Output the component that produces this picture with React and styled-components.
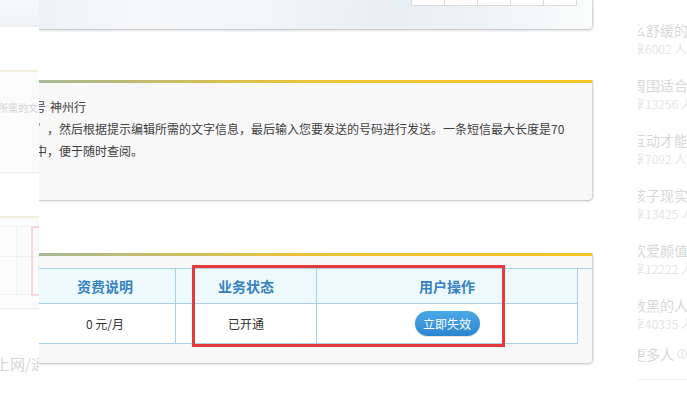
import React from "react";
import styled, { createGlobalStyle } from "styled-components";

const GlobalStyle = createGlobalStyle`
  html, body {
    margin: 0;
    padding: 0;
    background: #ffffff;
  }
  body {
    font-family: "Noto Sans CJK SC", "Noto Sans", sans-serif;
  }
`;

const Page = styled.div`
  display: flex;
  width: 687px;
  height: 403px;
  overflow: hidden;
  background: #ffffff;
`;

/* faded page behind, left side */
const LeftStrip = styled.div`
  flex: none;
  width: 39px;
  overflow: hidden;
  display: flex;
  flex-direction: column;
`;

const FadeBand = styled.div`
  flex: none;
  height: 26px;
  background: linear-gradient(180deg, #f7f9fa, #f0f3f6);
  border-bottom: 1px solid #ebebeb;
`;

const FadeLine = styled.div`
  flex: none;
  height: 2px;
  margin-top: ${(p) => p.$gap}px;
  background: #f1efdb;
`;

const FadeBox = styled.div`
  position: relative;
  flex: none;
  box-sizing: border-box;
  height: ${(p) => p.$h}px;
  padding-top: ${(p) => p.$pad || 0}px;
  background: #fbfbfb;
  border-bottom: 1px solid #efefef;
`;

const FadeText = styled.div`
  font-size: 10px;
  line-height: 12px;
  color: #d2d2d2;
  white-space: nowrap;
  text-indent: -2px;
`;

const FadeGrid = styled.div`
  display: grid;
  grid-template-columns: 17px 1fr;
  grid-template-rows: 30px 38px;
  margin-top: 8px;
  border-top: 1px solid #eef3f6;
  span {
    border-right: 1px solid #eef3f6;
    border-bottom: 1px solid #eef3f6;
  }
`;

const FadeMark = styled.div`
  position: absolute;
  left: 31px;
  top: 8px;
  width: 14px;
  height: 70px;
  box-sizing: border-box;
  border: 2px solid #f6d6d6;
`;

const FadeWord = styled.div`
  margin-top: 46px;
  font-size: 15px;
  line-height: 18px;
  color: #d6d6d6;
  white-space: nowrap;
  text-indent: -5px;
`;

/* main panel */
const Main = styled.div`
  flex: none;
  width: 555px;
  overflow: hidden;
  display: flex;
  flex-direction: column;
`;

const TopCard = styled.div`
  flex: none;
  box-sizing: border-box;
  width: 554px;
  height: 30px;
  display: flex;
  justify-content: flex-end;
  padding-right: 15px;
  background: linear-gradient(
    100deg,
    #eef2f6 0%,
    #f6f8fa 18%,
    #f3f6f8 40%,
    #e7eef4 62%,
    #eef3f6 80%,
    #fbfcfc 100%
  );
  border-right: 1px solid #d6d6d6;
  border-bottom: 1px solid #cdcdcd;
  border-bottom-right-radius: 5px;
  box-shadow: 1px 1px 2px rgba(0, 0, 0, 0.12);
`;

const MiniCells = styled.div`
  display: flex;
  height: 5px;
  border-bottom: 1px solid #dcdcdc;
  border-right: 1px solid #dcdcdc;
  span {
    width: 32px;
    border-left: 1px solid #dcdcdc;
    background: #ffffff;
  }
`;

const Card = styled.div`
  position: relative;
  flex: none;
  box-sizing: border-box;
  width: 554px;
  margin-top: ${(p) => p.$gap}px;
  padding-bottom: ${(p) => p.$bottom}px;
  background: #f8f8f8;
  border-right: 1px solid #d4d4d4;
  border-bottom: 1px solid #d0d0d0;
  border-bottom-right-radius: 5px;
  box-shadow: 1px 1px 2px rgba(0, 0, 0, 0.1);
`;

const Stripe = styled.div`
  height: 3px;
  background: linear-gradient(
    90deg,
    #a7b897 0%,
    #c7bd68 22%,
    #ecc236 48%,
    #f6c324 100%
  );
`;

const Desc = styled.div`
  padding-top: 13px;
  font-size: 12px;
  line-height: 22px;
  color: #3f3f3f;
`;

const Line = styled.div`
  display: flex;
  white-space: nowrap;
`;

const Lead = styled.span`
  flex: none;
  width: ${(p) => p.$w}px;
  margin-right: ${(p) => p.$space || 0}px;
  overflow: hidden;
  direction: rtl;
`;

const TableWrap = styled.div`
  padding-top: 12px;
`;

const Table = styled.div`
  display: grid;
  grid-template-columns: 141px 141px 261px;
  margin-left: -4px;
  border-top: 1px solid #a8d1e8;
`;

const Cell = styled.div`
  display: flex;
  align-items: center;
  justify-content: center;
  box-sizing: border-box;
  height: ${(p) => (p.$head ? 35 : 40)}px;
  border-right: 1px solid #a8d1e8;
  border-bottom: 1px solid #a8d1e8;
  background: ${(p) => (p.$head ? "#eef9fe" : "#ffffff")};
  color: ${(p) => (p.$head ? "#3582c3" : "#333333")};
  font-size: ${(p) => (p.$head ? 14 : 12)}px;
  font-weight: ${(p) => (p.$head ? 700 : 400)};
`;

const ActionButton = styled.button`
  width: 65px;
  height: 25px;
  padding: 0;
  border: none;
  border-radius: 13px;
  background: linear-gradient(180deg, #4ba8e7, #2c86d0);
  box-shadow: 0 1px 1px rgba(0, 0, 0, 0.12);
  color: #ffffff;
  font-family: inherit;
  font-size: 12px;
  cursor: pointer;
`;

const Highlight = styled.div`
  position: absolute;
  left: 153px;
  top: 12px;
  width: 313px;
  height: 82px;
  box-sizing: border-box;
  border: 3px solid #e6393c;
  pointer-events: none;
`;

/* faded page behind, right side */
const RightStrip = styled.div`
  flex: 1;
  overflow: hidden;
  padding-left: 16px;
  display: flex;
  flex-direction: column;
`;

const SideHeading = styled.div`
  margin-top: -15px;
  font-size: 14px;
  line-height: 14px;
  color: #cccccc;
  white-space: nowrap;
`;

const SideList = styled.div`
  margin-left: 28px;
  padding-top: 21px;
  overflow: hidden;
  display: flex;
  flex-direction: column;
  gap: 17px;
`;

const SideItem = styled.div`
  display: flex;
  flex-direction: column;
  white-space: nowrap;
`;

const SideTitle = styled.div`
  font-size: 14px;
  line-height: 20px;
  color: #d8d8d8;
  text-indent: -6px;
`;

const SideSub = styled.div`
  font-size: 12px;
  line-height: 18px;
  color: #e6e6e6;
  text-indent: -5px;
`;

const SideMore = styled.div`
  display: flex;
  align-items: center;
  gap: 3px;
  margin-top: -6px;
  font-size: 14px;
  line-height: 20px;
  color: #d8d8d8;
  white-space: nowrap;
  text-indent: -6px;
`;

const SideRule = styled.div`
  margin-top: -2px;
  height: 1px;
  background: #efefef;
`;

const topics = [
  { title: "么舒缓的压力", sub: "享6002 人参与" },
  { title: "周围适合的人", sub: "享13256 人参与" },
  { title: "互动才能懂", sub: "享7092 人参与" },
  { title: "孩子现实吗", sub: "享13425 人参与" },
  { title: "欢爱颜值高", sub: "享12222 人参与" },
  { title: "数黑的人多", sub: "享40335 人参与" },
];

const columns = ["资费说明", "业务状态", "用户操作"];

const App = () => {
  return (
    <>
      <GlobalStyle />
      <Page>
        <LeftStrip>
          <FadeBand />
          <FadeLine $gap={43} />
          <FadeBox $h={101} $pad={30}>
            <FadeText>所需的文字信息</FadeText>
          </FadeBox>
          <FadeLine $gap={43} />
          <FadeBox $h={91}>
            <FadeGrid>
              <span />
              <span />
              <span />
              <span />
            </FadeGrid>
            <FadeMark />
          </FadeBox>
          <FadeWord>上网/通话</FadeWord>
        </LeftStrip>

        <Main>
          <TopCard>
            <MiniCells>
              <span />
              <span />
              <span />
              <span />
              <span />
            </MiniCells>
          </TopCard>

          {/* 业务介绍 */}
          <Card $gap={50} $bottom={38}>
            <Stripe />
            <Desc>
              <Line>
                <Lead $w={7} $space={4}>号</Lead>神州行
              </Line>
              <Line>
                <Lead $w={8}>”</Lead>，然后根据提示编辑所需的文字信息，最后输入您要发送的号码进行发送。一条短信最大长度是70
              </Line>
              <Line>
                <Lead $w={8}>中</Lead>，便于随时查阅。
              </Line>
            </Desc>
          </Card>

          {/* 业务状态 */}
          <Card $gap={52} $bottom={19}>
            <Stripe />
            <TableWrap>
              <Table>
                {columns.map((c) => (
                  <Cell key={c} $head>
                    {c}
                  </Cell>
                ))}
                <Cell>0 元/月</Cell>
                <Cell>已开通</Cell>
                <Cell>
                  <ActionButton>立即失效</ActionButton>
                </Cell>
              </Table>
            </TableWrap>
            <Highlight />
          </Card>
        </Main>

        <RightStrip>
          <SideHeading>大家都在聊</SideHeading>
          <SideList>
            {topics.map((t) => (
              <SideItem key={t.title}>
                <SideTitle>{t.title}</SideTitle>
                <SideSub>{t.sub}</SideSub>
              </SideItem>
            ))}
            <SideMore>
              更多人
              <svg width="12" height="12" viewBox="0 0 12 12">
                <circle cx="6" cy="6" r="5" fill="none" stroke="#d8d8d8" strokeWidth="1" />
                <path d="M5 3.5 L7.5 6 L5 8.5" fill="none" stroke="#d8d8d8" strokeWidth="1" />
              </svg>
            </SideMore>
            <SideRule />
          </SideList>
        </RightStrip>
      </Page>
    </>
  );
};

export default App;
